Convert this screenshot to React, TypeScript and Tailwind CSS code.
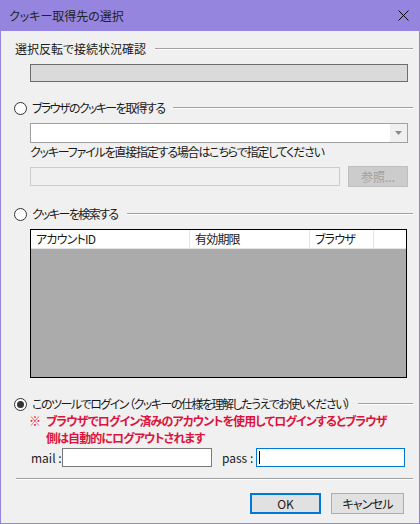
import { useState } from "react";

const font =
  "font-['Noto_Sans_CJK_JP','Noto_Sans',sans-serif] [font-feature-settings:'palt'] text-[12px] leading-4 text-[#1a1a1a]";

const Radio = ({ checked, label, tracking }: { checked?: boolean; label: string; tracking: string }) => (
  <div className="flex items-center h-4 pl-[13px] pr-[6px]">
    <span className="w-[13px] h-[13px] rounded-full border border-[#333] bg-white flex items-center justify-center shrink-0">
      {checked && <span className="w-[7px] h-[7px] rounded-full bg-[#333]" />}
    </span>
    <span className={`ml-[5px] whitespace-nowrap ${tracking}`}>{label}</span>
  </div>
);

const GroupLine = () => (
  <div className="flex-1 flex flex-col mr-[6px] ml-[3px]">
    <div className="h-px bg-[#a0a0a0]" />
    <div className="h-px bg-white" />
  </div>
);

const App = () => {
  const [mode, setMode] = useState<number>(3);
  const columns = [
    { label: "アカウントID", width: "w-[159px]" },
    { label: "有効期限", width: "w-[120px]" },
    { label: "ブラウザ", width: "w-[64px]" },
  ];

  return (
    <div className={`w-[420px] h-[524px] bg-[#9585de] flex flex-col ${font}`}>
      {/* title bar */}
      <div className="h-[31px] flex items-center justify-between pl-[9px] pr-[11px] shrink-0">
        <span className="text-[#222] text-[12px]">クッキー取得先の選択</span>
        <svg width="11" height="11" viewBox="0 0 11 11" className="text-black">
          <path d="M0.5 0.5 L10.5 10.5 M10.5 0.5 L0.5 10.5" stroke="currentColor" strokeWidth="1" />
        </svg>
      </div>

      <div className="flex-1 mx-px mb-px bg-[#f0f0f0] flex flex-col">
        <div className="flex items-center h-4 mt-[10px] pl-[14px]">
          <span className="whitespace-nowrap mr-[6px]">選択反転で接続状況確認</span>
          <GroupLine />
        </div>
        <div className="mt-[7px] ml-[29px] mr-[11px] h-[18px] border border-[#6d6d6d] bg-[#dadada]" />

        {/* browser cookie */}
        <div className="flex items-center mt-[18px]" onClick={() => setMode(1)}>
          <Radio checked={mode === 1} label="ブラウザのクッキーを取得する" tracking="tracking-[-1.6px]" />
          <GroupLine />
        </div>
        <div className="mt-[7px] ml-[29px] mr-[11px] h-[20px] border border-[#a0a0a0] bg-white flex justify-end items-center">
          <div className="w-[17px] h-full bg-[#f0f0f0] flex items-center justify-center">
            <svg width="7" height="4" viewBox="0 0 7 4">
              <path d="M0 0 H7 L3.5 4 Z" fill="#8a8a8a" />
            </svg>
          </div>
        </div>
        <div className="mt-px ml-[29px] h-4 whitespace-nowrap tracking-[-1.2px]">
          クッキーファイルを直接指定する場合はこちらで指定してください
        </div>
        <div className="mt-[6px] ml-[29px] mr-[11px] flex items-center gap-[8px]">
          <div className="w-[310px] h-[19px] border border-[#cccccc] bg-[#f0f0f0]" />
          <div className="flex-1 h-[21px] border border-[#bfbfbf] bg-[#cccccc] text-[#a0a0a0] flex items-center justify-center">
            参照...
          </div>
        </div>

        {/* search cookie */}
        <div className="flex items-center mt-[19px]" onClick={() => setMode(2)}>
          <Radio checked={mode === 2} label="クッキーを検索する" tracking="tracking-[-1.6px]" />
          <GroupLine />
        </div>
        <div className="mt-[7px] ml-[29px] mr-[12px] h-[149px] border border-black bg-[#ababab] flex flex-col">
          <div className="h-[19px] bg-white flex border-b border-[#e5e5e5]">
            {columns.map((c) => (
              <div key={c.label} className={`${c.width} h-full border-r border-[#e5e5e5] pl-[5px] flex items-center whitespace-nowrap tracking-[-0.8px]`}>
                {c.label}
              </div>
            ))}
            <div className="flex-1" />
          </div>
        </div>

        {/* tool login */}
        <div className="flex items-center mt-[18px]" onClick={() => setMode(3)}>
          <Radio
            checked={mode === 3}
            label="このツールでログイン （クッキーの仕様を理解したうえでお使いください）"
            tracking="tracking-[-1.5px]"
          />
          <GroupLine />
        </div>
        <div className="ml-[28px] flex text-[#dc143c] font-bold leading-[17px] tracking-[-0.9px]">
          <span className="w-[17px] shrink-0">※</span>
          <span className="whitespace-nowrap">
            ブラウザでログイン済みのアカウントを使用してログインするとブラウザ
            <br />
            側は自動的にログアウトされます
          </span>
        </div>
        <div className="mt-[2px] ml-[30px] mr-[14px] flex items-center h-[19px]">
          <span className="w-[28px] whitespace-nowrap">mail :</span>
          <div className="ml-[3px] w-[150px] h-[19px] border border-[#7a7a7a] bg-white" />
          <span className="ml-[10px] w-[30px] whitespace-nowrap">pass :</span>
          <div className="ml-[4px] flex-1 h-[19px] border border-[#0078d7] bg-white flex items-center pl-[2px]">
            <div className="w-px h-[13px] bg-black" />
          </div>
        </div>

        <div className="mt-[11px] ml-[15px] mr-[6px] flex flex-col">
          <div className="h-px bg-[#a0a0a0]" />
          <div className="h-px bg-white" />
        </div>

        <div className="mt-[13px] mr-[15px] flex justify-end gap-[10px]">
          <button className="w-[71px] h-[21px] border-2 border-[#0078d7] bg-[#e1e1e1] flex items-center justify-center">
            OK
          </button>
          <button className="w-[73px] h-[21px] border border-[#adadad] bg-[#e1e1e1] flex items-center justify-center tracking-[-0.8px]">
            キャンセル
          </button>
        </div>
      </div>
    </div>
  );
};

export default App;
